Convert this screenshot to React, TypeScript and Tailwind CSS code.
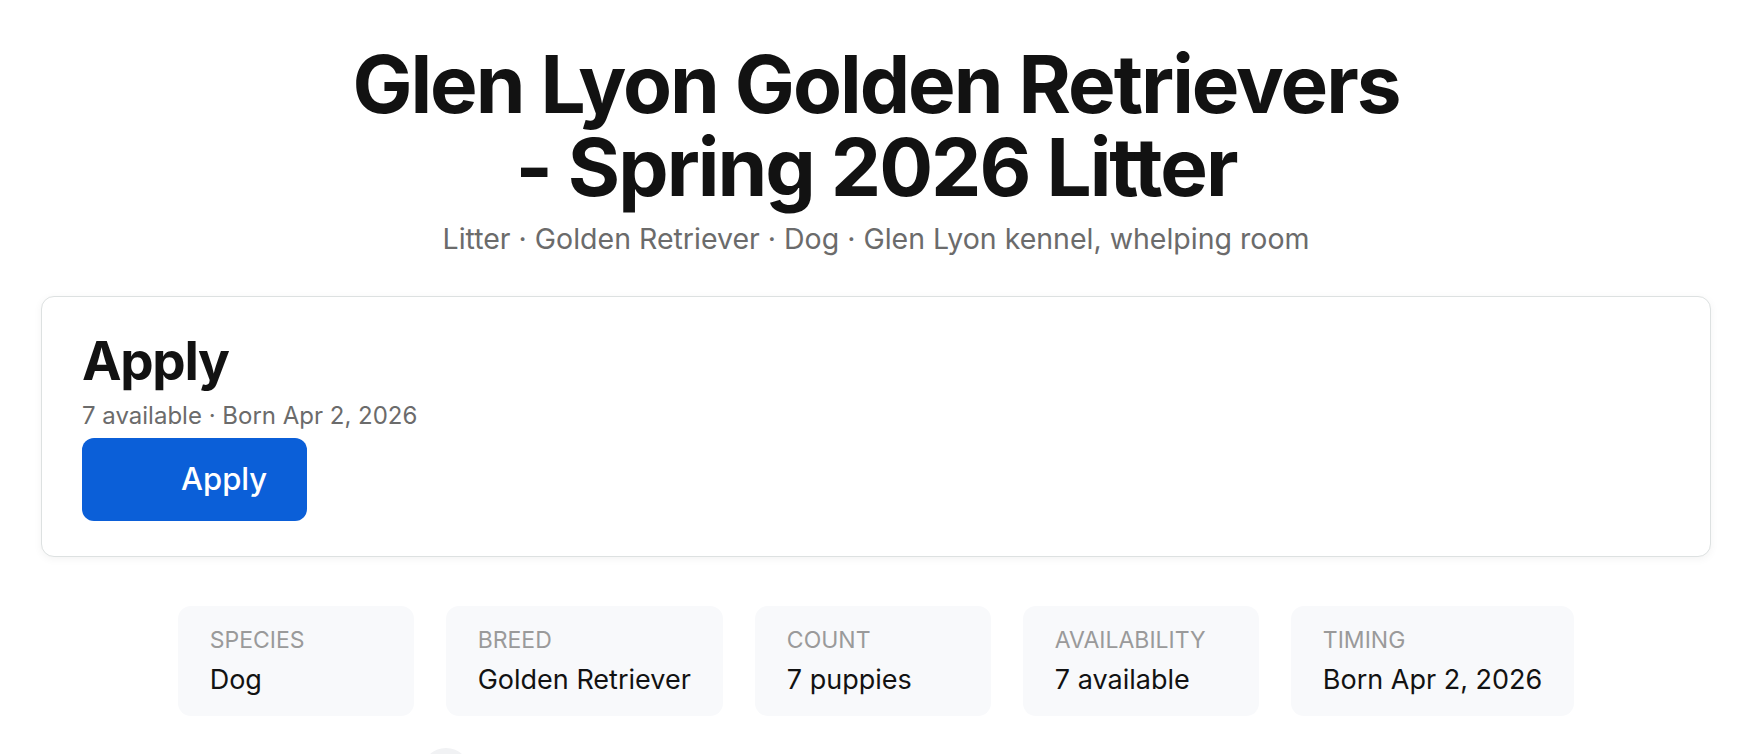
import React from "react";

const stats = [
  { label: "Species", value: "Dog" },
  { label: "Breed", value: "Golden Retriever" },
  { label: "Count", value: "7 puppies" },
  { label: "Availability", value: "7 available" },
  { label: "Timing", value: "Born Apr 2, 2026" },
];

const App = () => {
  return (
    <div className="min-h-screen bg-white px-[41px] pt-[42px] font-['Inter','Liberation_Sans',sans-serif] text-[#121212]">
      {/* HEADER */}
      <header className="flex flex-col items-center text-center">
        <h1 className="text-[80px] font-bold leading-[83px] tracking-tight text-[#121212]">
          <span className="block">Glen Lyon Golden Retrievers</span>
          <span className="block">- Spring 2026 Litter</span>
        </h1>
        <p className="mt-[12px] text-[28.5px] leading-[38px] text-[#6b6b6b]">
          Litter · Golden Retriever · Dog · Glen Lyon kennel, whelping room
        </p>
      </header>

      {/* APPLY CARD */}
      <section className="mt-[38px] rounded-[13px] border-[1.5px] border-[#dde1e1] bg-white px-[40px] pt-[34px] pb-[35px] shadow-[0_2px_8px_rgba(0,0,0,0.05)]">
        <h2 className="text-[53px] font-bold leading-[60px] tracking-tight">Apply</h2>
        <p className="mt-[9px] text-[24px] leading-[32px] text-[#6b6b6b]">
          7 available · Born Apr 2, 2026
        </p>
        <button className="mt-[6px] flex h-[83px] items-center rounded-[12px] bg-[#0b5fd8] pl-[99px] pr-[40px] text-[31px] font-medium text-white">
          Apply
        </button>
      </section>

      {/* STATS */}
      <div className="mx-auto mt-[49px] w-fit">
        <div className="flex flex-wrap justify-center gap-8">
          {stats.map((s) => (
            <div
              key={s.label}
              className="min-w-[236px] rounded-[13px] bg-[#f8f9fb] px-8 pt-[20px] pb-[20px]"
            >
              <div className="text-[23px] uppercase leading-[29px] text-[#9a9a9a]">{s.label}</div>
              <div className="mt-[8px] text-[27px] leading-[33px] text-[#121212]">{s.value}</div>
            </div>
          ))}
        </div>
        <div className="mt-8 flex pl-[244px]">
          <div className="h-12 w-12 rounded-full bg-[#f1f2f4]" />
        </div>
      </div>
    </div>
  );
};

export default App;
